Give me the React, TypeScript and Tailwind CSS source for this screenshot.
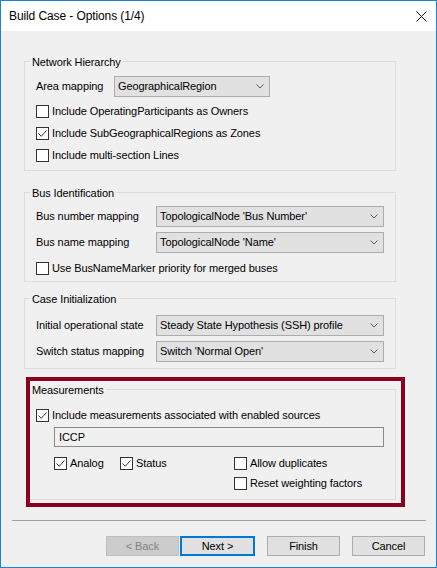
import React from "react";

const Check = ({ checked }: { checked?: boolean }) => (
  <span className="w-[13px] h-[13px] border border-[#333333] bg-white shrink-0 flex">
    {checked && (
      <svg width="11" height="11" viewBox="0 0 11 11">
        <polyline points="1.5,5.5 4.2,8.3 9.5,2.5" fill="none" stroke="#333333" strokeWidth="1" />
      </svg>
    )}
  </span>
);

const CheckRow = ({ checked, label, className = "" }: { checked?: boolean; label: string; className?: string }) => (
  <div className={"flex items-center h-[13px] " + className}>
    <Check checked={checked} />
    <span className="ml-[3px] whitespace-nowrap leading-[13px]">{label}</span>
  </div>
);

const Combo = ({ value, className = "" }: { value: string; className?: string }) => (
  <div className={"h-[21px] border border-[#adadad] bg-[#e1e1e1] flex items-center justify-between pl-[3px] pr-[5px] " + className}>
    <span className="whitespace-nowrap">{value}</span>
    <svg width="8" height="5" viewBox="0 0 8 5">
      <polyline points="0.5,0.5 4,4 7.5,0.5" fill="none" stroke="#5a5a5a" strokeWidth="1" />
    </svg>
  </div>
);

const Title = ({ text }: { text: string }) => (
  <div className="-mt-[7px] -ml-[6px] px-[2px] bg-[#f0f0f0] w-fit h-[14px] leading-[14px] whitespace-nowrap">{text}</div>
);

export default function App() {
  return (
    <div className="w-[437px] h-[568px] border border-[#1883d7] bg-[#f0f0f0] flex flex-col font-['Liberation_Sans',Arial,sans-serif] text-[11px] tracking-[-0.1px] text-black overflow-hidden">
      {/* Title bar */}
      <div className="h-[30px] bg-white flex items-center justify-between pl-[8px] pr-[9px] shrink-0">
        <span className="text-[12px] tracking-[-0.1px]">Build Case - Options (1/4)</span>
        <svg width="11" height="11" viewBox="0 0 11 11">
          <line x1="0.5" y1="0.5" x2="10.5" y2="10.5" stroke="#111" strokeWidth="1" />
          <line x1="10.5" y1="0.5" x2="0.5" y2="10.5" stroke="#111" strokeWidth="1" />
        </svg>
      </div>

      {/* Network Hierarchy */}
      <div className="mt-[30px] ml-[23px] w-[372px] h-[110px] border border-[#dcdcdc] flex flex-col pl-[11px] shrink-0">
        <Title text="Network Hierarchy" />
        <div className="mt-[7px] flex items-center">
          <span className="w-[78px] whitespace-nowrap">Area mapping</span>
          <Combo value="GeographicalRegion" className="w-[156px]" />
        </div>
        <CheckRow label="Include OperatingParticipants as Owners" className="mt-[8px]" />
        <CheckRow checked label="Include SubGeographicalRegions as Zones" className="mt-[9px]" />
        <CheckRow label="Include multi-section Lines" className="mt-[9px]" />
      </div>

      {/* Bus Identification */}
      <div className="mt-[21px] ml-[23px] w-[372px] h-[90px] border border-[#dcdcdc] flex flex-col pl-[11px] shrink-0">
        <Title text="Bus Identification" />
        <div className="mt-[6px] flex items-center">
          <span className="w-[120px] whitespace-nowrap">Bus number mapping</span>
          <Combo value="TopologicalNode 'Bus Number'" className="w-[228px]" />
        </div>
        <div className="mt-[5px] flex items-center">
          <span className="w-[120px] whitespace-nowrap">Bus name mapping</span>
          <Combo value="TopologicalNode 'Name'" className="w-[228px]" />
        </div>
        <CheckRow label="Use BusNameMarker priority for merged buses" className="mt-[9px]" />
      </div>

      {/* Case Initialization */}
      <div className="mt-[16px] ml-[23px] w-[372px] h-[71px] border border-[#dcdcdc] flex flex-col pl-[11px] shrink-0">
        <Title text="Case Initialization" />
        <div className="mt-[9px] flex items-center">
          <span className="w-[120px] whitespace-nowrap">Initial operational state</span>
          <Combo value="Steady State Hypothesis (SSH) profile" className="w-[228px]" />
        </div>
        <div className="mt-[5px] flex items-center">
          <span className="w-[120px] whitespace-nowrap">Switch status mapping</span>
          <Combo value="Switch 'Normal Open'" className="w-[228px]" />
        </div>
      </div>

      {/* Measurements (highlighted) */}
      <div className="mt-[8px] ml-[25px] w-[379px] h-[130px] border-4 border-[#8a0021] flex flex-col shrink-0">
        <div className="mt-[8px] w-[366px] h-[111px] border border-l-0 border-[#dcdcdc] flex flex-col pl-[6px]">
          <Title text="Measurements" />
          <CheckRow checked label="Include measurements associated with enabled sources" className="mt-[12px]" />
          <div className="mt-[5px] ml-[18px] w-[330px] h-[20px] border border-[#8a8a8a] bg-[#f0f0f0] flex items-center pl-[4px]">
            ICCP
          </div>
          <div className="mt-[10px] ml-[18px] flex">
            <CheckRow checked label="Analog" className="w-[66px]" />
            <CheckRow checked label="Status" className="w-[114px]" />
            <CheckRow label="Allow duplicates" />
          </div>
          <CheckRow label="Reset weighting factors" className="mt-[7px] ml-[198px]" />
        </div>
      </div>

      {/* Separator */}
      <div className="mt-[13px] ml-[11px] w-[414px] h-px bg-[#a0a0a0] shrink-0" />

      {/* Buttons */}
      <div className="mt-[15px] flex shrink-0">
        <div className="ml-[105px] w-[73px] h-[20px] border border-[#bfbfbf] bg-[#cccccc] text-[#838383] flex items-center justify-center">
          &lt; Back
        </div>
        <div className="ml-[1px] w-[75px] h-[20px] border-2 border-[#0078d7] bg-[#e1e1e1] flex items-center justify-center">
          Next &gt;
        </div>
        <div className="ml-[12px] w-[73px] h-[20px] border border-[#adadad] bg-[#e1e1e1] flex items-center justify-center">
          Finish
        </div>
        <div className="ml-[12px] w-[73px] h-[20px] border border-[#adadad] bg-[#e1e1e1] flex items-center justify-center">
          Cancel
        </div>
      </div>
    </div>
  );
}
